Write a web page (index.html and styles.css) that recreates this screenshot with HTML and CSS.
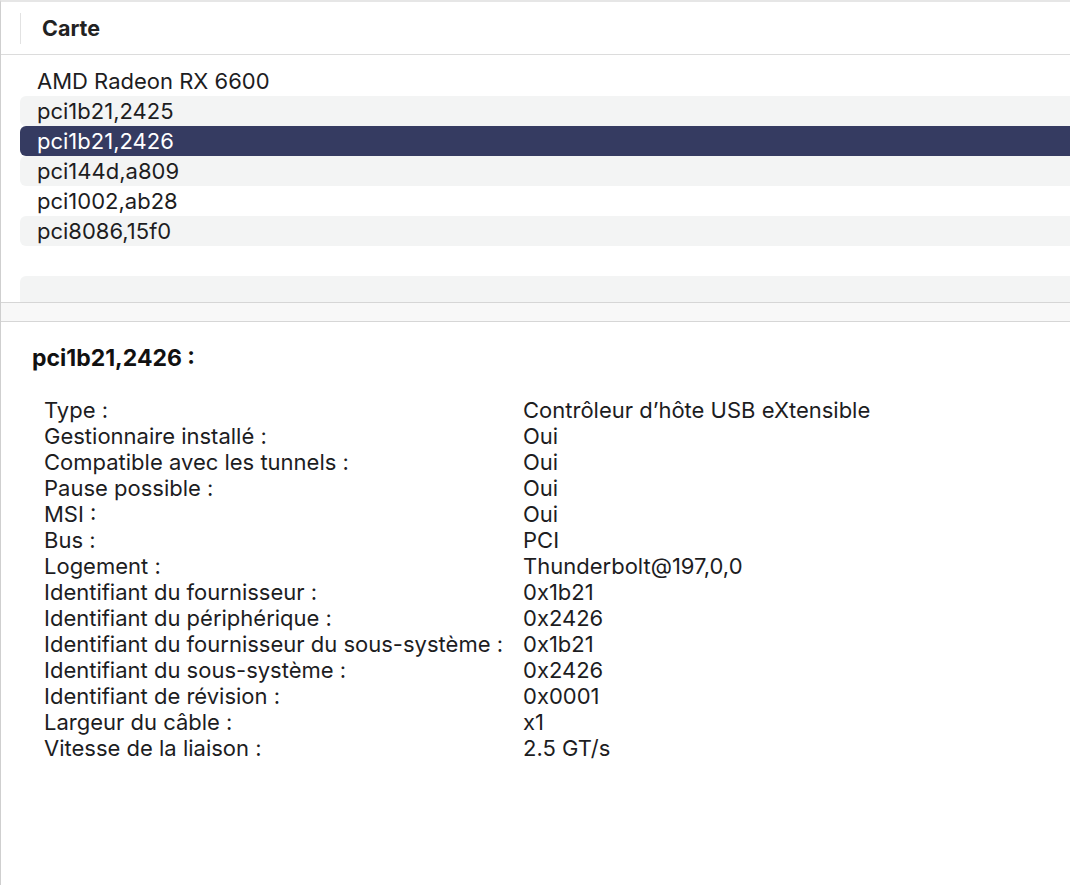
FILE: index.html
```html
<!DOCTYPE html>
<html lang="fr">

<head>
    <meta charset="UTF-8">
    <meta name="viewport" content="width=device-width, initial-scale=1.0">
    <title>Informations système – PCI</title>
    <link rel="stylesheet" href="styles.css">
</head>

<body>
    <div class="window">
        <!-- en-tête de colonne -->
        <div class="table-header">
            <span class="col-sep"></span>
            <span class="col-title">Carte</span>
        </div>

        <!-- liste des cartes -->
        <ul class="device-list">
            <li class="device-row">AMD Radeon RX 6600</li>
            <li class="device-row">pci1b21,2425</li>
            <li class="device-row selected">pci1b21,2426</li>
            <li class="device-row">pci144d,a809</li>
            <li class="device-row">pci1002,ab28</li>
            <li class="device-row">pci8086,15f0</li>
            <li class="device-row"></li>
            <li class="device-row"></li>
        </ul>

        <div class="split-divider"></div>

        <!-- détails de la carte sélectionnée -->
        <section class="details">
            <h2 class="details-title">pci1b21,2426 :</h2>
            <dl class="props">
                <dt>Type :</dt><dd>Contrôleur d’hôte USB eXtensible</dd>
                <dt>Gestionnaire installé :</dt><dd>Oui</dd>
                <dt>Compatible avec les tunnels :</dt><dd>Oui</dd>
                <dt>Pause possible :</dt><dd>Oui</dd>
                <dt>MSI :</dt><dd>Oui</dd>
                <dt>Bus :</dt><dd>PCI</dd>
                <dt>Logement :</dt><dd>Thunderbolt@197,0,0</dd>
                <dt>Identifiant du fournisseur :</dt><dd>0x1b21</dd>
                <dt>Identifiant du périphérique :</dt><dd>0x2426</dd>
                <dt>Identifiant du fournisseur du sous-système :</dt><dd>0x1b21</dd>
                <dt>Identifiant du sous-système :</dt><dd>0x2426</dd>
                <dt>Identifiant de révision :</dt><dd>0x0001</dd>
                <dt>Largeur du câble :</dt><dd>x1</dd>
                <dt>Vitesse de la liaison :</dt><dd>2.5 GT/s</dd>
            </dl>
        </section>
    </div>
</body>

</html>
```
FILE: styles.css
```css
/* base */
body {
    margin: 0;
    background-color: white;
    font-family: Inter, "Noto Sans", sans-serif;
    font-size: 22px;
    color: #1d1d1f;
}

.window {
    min-height: 883px;
    border-top: 2px solid #e6e6e6;
    border-left: 1px solid #cfcfcf;
}

/* en-tête de colonne */
.table-header {
    display: flex;
    align-items: center;
    height: 52px;
    border-bottom: 1px solid #dcdcdc;
}

.col-sep {
    width: 1px;
    height: 31px;
    margin-left: 19px;
    background-color: #e2e2e2;
}

.col-title {
    margin-left: 21px;
    font-weight: 700;
    font-size: 21.5px;
    color: #222;
}

/* liste */
.device-list {
    list-style: none;
    margin: 0;
    padding: 11px 0 0 19px;
    height: 236px;
    overflow: hidden;
}

.device-row {
    height: 30px;
    line-height: 30px;
    padding-left: 17px;
    border-radius: 6px 0 0 6px;
    white-space: nowrap;
}

.device-row:nth-child(even) {
    background-color: #f3f4f4;
}

.device-row.selected {
    background-color: #353b61;
    color: white;
}

/* séparateur entre la liste et les détails */
.split-divider {
    height: 18px;
    background-color: #f8f8f8;
    border-top: 1px solid #d6d6d6;
    border-bottom: 1px solid #d6d6d6;
}

/* détails */
.details {
    padding: 23px 0 0 31px;
}

.details-title {
    margin: 0;
    font-size: 23px;
    line-height: 26px;
    font-weight: 700;
    color: #111;
}

.props {
    display: grid;
    grid-template-columns: max-content 1fr;
    column-gap: 20px;
    margin: 26px 0 0 12px;
    line-height: 26px;
}

.props dt,
.props dd {
    margin: 0;
    white-space: nowrap;
}
```
